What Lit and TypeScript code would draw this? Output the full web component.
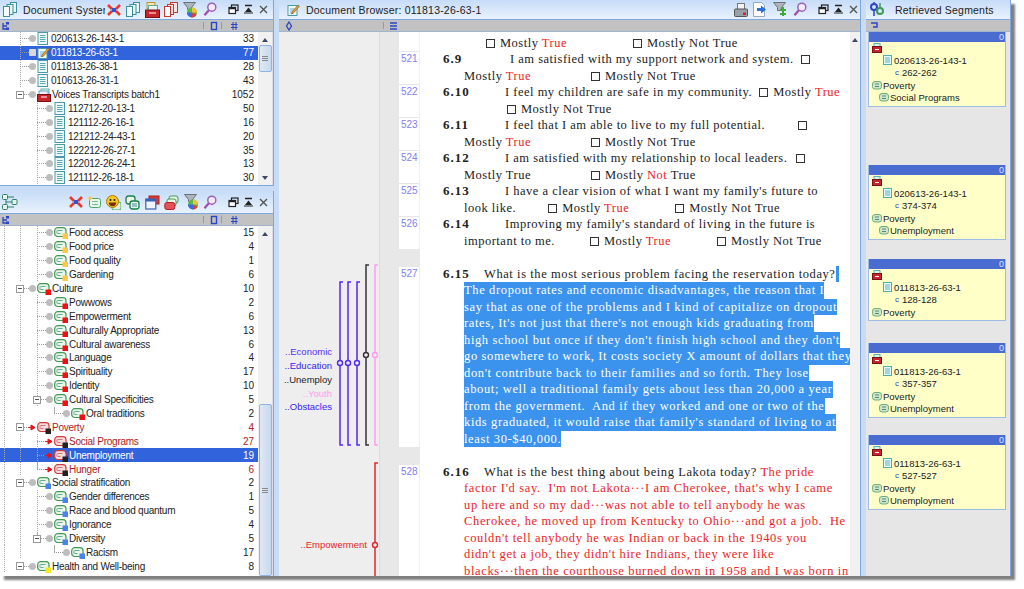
import { LitElement, html, css, svg } from "lit";
import { customElement } from "lit/decorators.js";

const S = (w: number, h: number, c: any) => html`<svg class="ic" width=${w} height=${h} viewBox="0 0 ${w} ${h}">${c}</svg>`;

const docI = () => S(13, 13, svg`<rect x="1" y=".5" width="9.500" height="12" fill="#eef8f8" stroke="#4a9aa8"/><path d="M3 3.500h5.500M3 5.500h5.500M3 7.500h5.500M3 9.500h5.500" stroke="#5aa9b5"/>`);
const memoI = () => S(13, 13, svg`<rect x="1" y="2.500" width="9" height="10" fill="#f4fafa" stroke="#4a9aa8"/><path d="M3 6h5M3 8h5M3 10h3" stroke="#7ab"/><path d="M5 9l6-7 1.500 1.200-6 7-2 .6z" fill="#e8a23a" stroke="#6b4a10" stroke-width=".5"/>`);
const setI = () => S(14, 14, svg`<rect x="4" y="1" width="8" height="6" fill="#dff" stroke="#6aa"/><rect x="2" y="3" width="9" height="5" fill="#eef" stroke="#6aa"/><rect x=".5" y="6.500" width="13" height="7" fill="#c8242c" stroke="#7a1015"/><path d="M4 9h6" stroke="#fff"/>`);
const codeI = (sq: string, red = false) => S(14, 13, svg`<rect x=".7" y="1.700" width="11.300" height="8.800" rx="3" fill=${red ? "#f6dcdc" : "#eaf6e8"} stroke=${red ? "#d23b3b" : "#3f9a56"} stroke-width="1.200"/><path d="M3.500 4.500h5M3.500 7.500h3M3 4.500v3" stroke=${red ? "#c77" : "#6a9"} fill="none"/><rect x="8.500" y="7.500" width="5.500" height="5.500" fill=${sq}/>`);
const smallCode = () => S(10, 10, svg`<rect x=".5" y="1.500" width="9" height="7.500" rx="2.500" fill="#cfe6c6" stroke="#6dae7c"/><path d="M3 4h4M3 6.500h4" stroke="#588"/>`);
const arrowI = () => S(8, 7, svg`<path d="M0 3.500h3M3 1l4 2.500-4 2.500z" fill="#e8101a" stroke="#e8101a"/>`);

const crossI = () => S(14, 14, svg`<path d="M1 2l4 4M13 2l-4 4M1 12l4-4M13 12l-4-4" stroke="#e8392c" stroke-width="2.600"/><rect x="5" y="5" width="4" height="4" fill="#2a55d8"/>`);
const docsI = () => S(14, 15, svg`<rect x="7.500" y=".5" width="6" height="10" fill="#e9f7f7" stroke="#3d8f9c"/><rect x="4" y="2.500" width="6" height="10" fill="#e9f7f7" stroke="#3d8f9c"/><rect x=".5" y="4.500" width="6" height="10" fill="#f4fbfb" stroke="#3d8f9c"/>`);
const redSetI = () => S(15, 16, svg`<rect x="2" y=".5" width="8" height="6" fill="#f5e6a8" stroke="#b9962e"/><rect x="3.500" y="3.500" width="9" height="5" fill="#eaf4f4" stroke="#6a9"/><rect x=".5" y="8" width="14" height="7.500" fill="#c8242c" stroke="#7a1015"/><path d="M4 11h7" stroke="#fff"/>`);
const copyI = () => S(14, 15, svg`<rect x="6.500" y=".5" width="7" height="10" fill="#fbe4e0" stroke="#c43a30"/><rect x="3.500" y="2.500" width="6" height="10" fill="#fbe4e0" stroke="#c43a30"/><rect x=".5" y="4.500" width="6" height="10" fill="#fff" stroke="#c43a30"/>`);
const filterI = () => S(15, 16, svg`<path d="M.5 .5h12l-4 5v2H4.500v-2z" fill="#aeb4bc" stroke="#6d727a"/><circle cx="9" cy="10.500" r="5" fill="#56b84a"/><path d="M9 10.500V5.500a5 5 0 0 1 5 5z" fill="#f2c230"/><path d="M9 10.500l4.500 2a5 5 0 0 1-4.500 3z" fill="#e23b3b"/><path d="M9 10.500v5a5 5 0 0 1-5-5z" fill="#3b6be2"/>`);
const magI = () => S(14, 15, svg`<circle cx="8.800" cy="5.200" r="4" fill="#f3eaf8" stroke="#9a62b5" stroke-width="1.500"/><path d="M5.800 8.300L1.500 13.300" stroke="#a04cb0" stroke-width="2.200"/>`);
const filtGreenI = () => S(15, 15, svg`<path d="M.5 .5h12l-4 5v3H4.500v-3z" fill="#aeb4bc" stroke="#6d727a"/><path d="M10 5v9M7 8h6M7 12h6" stroke="#43a83c" stroke-width="2"/>`);
const printI = () => S(14, 14, svg`<rect x="3.500" y=".5" width="7" height="6" fill="#f4f4f4" stroke="#777"/><rect x=".5" y="6" width="13" height="7.500" rx="1" fill="#9aa0a6" stroke="#555"/><rect x="9" y="9.500" width="3" height="2.500" fill="#d8232a"/>`);
const exportI = () => S(14, 15, svg`<path d="M.5 .5h8l3 3v11H.5z" fill="#fff" stroke="#9ab"/><path d="M4 6h4V3.500l5 4-5 4V9H4z" fill="#2a6fd8"/>`);
const winI = () => S(11, 11, svg`<rect x="3.500" y="1" width="6.500" height="5.500" fill="none" stroke="#222" stroke-width="1.200"/><rect x="1" y="3.500" width="6.500" height="6" fill="#fff" stroke="#222" stroke-width="1.200"/><path d="M1 4.500h6.500" stroke="#222" stroke-width="1.500"/>`);
const pinI = () => S(11, 11, svg`<path d="M2 1.500h7" stroke="#222" stroke-width="1.500"/><path d="M5.500 3.500L9 8H2z" fill="#222"/><path d="M1 9h9" stroke="#222"/>`);
const closeI = () => S(11, 11, svg`<path d="M2 2l7 7M9 2l-7 7" stroke="#555" stroke-width="1.400"/>`);
const netI = () => S(16, 16, svg`<path d="M4 3v10M4 3h8M4 13h8M4 8h8" stroke="#2f7f6a" fill="none"/><rect x=".5" y=".5" width="5" height="5" rx="1" fill="#e9f5e9" stroke="#2f7f6a"/><rect x=".5" y="10.500" width="5" height="5" rx="1" fill="#e9f5e9" stroke="#2f7f6a"/><rect x="10" y="5.500" width="5" height="5" rx="1" fill="#e9f5e9" stroke="#2f7f6a"/>`);
const codeYI = () => S(14, 15, svg`<rect x="2.500" y="3.500" width="11" height="9" rx="2" fill="#e9f7e6" stroke="#4aa66a"/><path d="M5 6.500h6M5 9.500h6" stroke="#7b9"/><path d="M3 .5l1 2 2 .5-2 1-1 2-1-2-2-1 2-.5z" fill="#f6c93c"/>`);
const smileI = () => S(15, 15, svg`<rect x="6" y="7" width="9" height="8" rx="2" fill="#dff0dc" stroke="#4aa66a"/><circle cx="6.500" cy="6.500" r="6" fill="#f8c820" stroke="#a87d10"/><circle cx="4.500" cy="5" r="1" fill="#222"/><circle cx="8.500" cy="5" r="1" fill="#222"/><path d="M2.800 7.500h7.400a3.700 3.700 0 0 1-7.400 0z" fill="#7a2a12"/>`);
const codesI = () => S(15, 15, svg`<rect x="1" y="1" width="9" height="8" rx="2.500" fill="#eaf6e8" stroke="#17804a" stroke-width="1.300"/><rect x="5" y="6" width="9" height="8" rx="2.500" fill="#eaf6e8" stroke="#17804a" stroke-width="1.300"/><path d="M7 9h5M7 11h5" stroke="#48a"/>`);
const frameI = () => S(15, 15, svg`<rect x="4" y="1" width="10" height="8" fill="#d8382e" stroke="#a22"/><rect x=".8" y="4" width="10" height="10" fill="#f1f5fb" stroke="#3a62b8" stroke-width="1.200"/><rect x=".8" y="4" width="10" height="2.500" fill="#3a62b8"/>`);
const stackI = () => S(15, 15, svg`<rect x="5" y="1" width="9" height="7" rx="2" fill="#eaf6e8" stroke="#3f9a56"/><rect x="3" y="4" width="9" height="7" rx="2" fill="#eaf6e8" stroke="#3f9a56"/><rect x=".8" y="7.500" width="10" height="7" rx="2" fill="#e6505a" stroke="#a22"/>`);
const linkI = () => S(16, 15, svg`<circle cx="5" cy="5" r="3" fill="none" stroke="#2b45c8" stroke-width="2"/><circle cx="11" cy="9" r="3" fill="none" stroke="#3f9a56" stroke-width="2"/><path d="M5 1v-1M5 8v6" stroke="#2b45c8" stroke-width="1.500"/><path d="M11 1v5" stroke="#3f9a56" stroke-width="1.500"/>`);
const tinyBlue = (c: any) => S(8, 10, c);
const treeTiny = () => tinyBlue(svg`<path d="M1 2v6h6M1 5h4" stroke="#2b45c8" fill="none" stroke-width="1.300"/><rect x="4" y="1" width="3" height="2.500" fill="#2b45c8"/><rect x="4" y="6.500" width="3" height="2.500" fill="#2b45c8"/>`);
const zeroTiny = () => tinyBlue(svg`<rect x="1.500" y="1.500" width="5" height="7" fill="none" stroke="#2b45c8" stroke-width="1.400"/>`);
const hashTiny = () => tinyBlue(svg`<path d="M3 1v8M6 1v8M1 3.500h6.500M1 6.500h6.500" stroke="#2b45c8"/>`);
const diaTiny = () => tinyBlue(svg`<path d="M4 1l2.500 4L4 9 1.500 5z" fill="none" stroke="#2b45c8" stroke-width="1.300"/>`);
const listTiny = () => tinyBlue(svg`<path d="M0 2h7M0 5h7M0 8h7" stroke="#2b45c8" stroke-width="1.300"/>`);
const segTiny = () => tinyBlue(svg`<path d="M1 2h6v4H3" fill="none" stroke="#2b45c8" stroke-width="1.500"/>`);

type Row = { l: number; t: string; n: string; c: number; sq?: string; exp?: boolean; g: number[]; h?: number; sel?: boolean; red?: boolean };

const topRows: Row[] = [
  ...[["020613-26-143-1", 33], ["011813-26-63-1", 77], ["011813-26-38-1", 28], ["010613-26-31-1", 43]].map(([n, c], i) => ({ l: 0, t: i === 1 ? "memo" : "doc", n, c, g: [20], sel: i === 1 } as Row)),
  { l: 0, t: "set", n: "Voices Transcripts batch1", c: 1052, exp: true, g: [] },
  ...[["112712-20-13-1", 50], ["121112-26-16-1", 16], ["121212-24-43-1", 20], ["122212-26-27-1", 35], ["122012-26-24-1", 13], ["121112-26-18-1", 30]].map(([n, c]) => ({ l: 1, t: "doc", n, c, g: [37] } as Row)),
];

const Y = "#ffc84a", R = "#ee1111", K = "#222", B = "#4a82f0";
const lowRows: Row[] = [
  ...([["Food access", 15], ["Food price", 4], ["Food quality", 1], ["Gardening", 6]] as [string, number][]).map(([n, c]) => ({ l: 1, t: "code", n, c, sq: Y, g: [4, 20, 37] })),
  { l: 0, t: "code", n: "Culture", c: 10, sq: R, exp: true, g: [4] },
  ...([["Powwows", 2], ["Empowerment", 6], ["Culturally Appropriate", 13], ["Cultural awareness", 6], ["Language", 4], ["Spirituality", 17], ["Identity", 10]] as [string, number][]).map(([n, c]) => ({ l: 1, t: "code", n, c, sq: R, g: [4, 20, 37] })),
  { l: 1, t: "code", n: "Cultural Specificities", c: 5, sq: R, exp: true, g: [4, 20, 37] },
  { l: 2, t: "code", n: "Oral traditions", c: 2, sq: R, g: [4, 20], h: 54 },
  { l: 0, t: "code", n: "Poverty", c: 4, sq: K, exp: true, red: true, g: [4] },
  { l: 1, t: "code", n: "Social Programs", c: 27, sq: K, red: true, g: [4, 20, 37] },
  { l: 1, t: "code", n: "Unemployment", c: 19, sq: K, red: true, sel: true, g: [4, 20, 37] },
  { l: 1, t: "code", n: "Hunger", c: 6, sq: K, red: true, g: [4, 20], h: 37 },
  { l: 0, t: "code", n: "Social stratification", c: 2, sq: B, exp: true, g: [4] },
  ...([["Gender differences", 1], ["Race and blood quantum", 5], ["Ignorance", 4]] as [string, number][]).map(([n, c]) => ({ l: 1, t: "code", n, c, sq: B, g: [4, 20, 37] })),
  { l: 1, t: "code", n: "Diversity", c: 5, sq: B, exp: true, g: [4, 20], h: 37 },
  { l: 2, t: "code", n: "Racism", c: 17, sq: B, g: [4, 20], h: 54 },
  { l: 0, t: "code", n: "Health and Well-being", c: 8, sq: "#f4e81e", exp: true, g: [4] },
];

const sp = (w: number) => html`<span class="sp" style="width:${w}px"></span>`;
const box = html`<span class="box"></span>`;
const r = (t: string) => html`<span class="r">${t}</span>`;

const paras = [
  { n: "", lines: [html`<div class="ln i2">${box}${sp(5)}Mostly ${r("True")}${sp(66)}${box}${sp(5)}Mostly Not True</div>`] },
  { n: "521", lines: [
    html`<div class="ln"><b class="q q9">6.9</b>I am satisfied with my support network and system.${sp(7)}${box}</div>`,
    html`<div class="ln i1">Mostly ${r("True")}${sp(60)}${box}${sp(5)}Mostly Not True</div>`] },
  { n: "522", lines: [
    html`<div class="ln"><b class="q">6.10</b>I feel my children are safe in my community.${sp(7)}${box}${sp(5)}Mostly ${r("True")}</div>`,
    html`<div class="ln i3">${box}${sp(5)}Mostly Not True</div>`] },
  { n: "523", lines: [
    html`<div class="ln"><b class="q">6.11</b>I feel that I am able to live to my full potential.${sp(33)}${box}</div>`,
    html`<div class="ln i1">Mostly ${r("True")}${sp(60)}${box}${sp(5)}Mostly Not True</div>`] },
  { n: "524", lines: [
    html`<div class="ln"><b class="q">6.12</b>I am satisfied with my relationship to local leaders.${sp(9)}${box}</div>`,
    html`<div class="ln i1">Mostly True${sp(60)}${box}${sp(5)}Mostly ${r("Not")} True</div>`] },
  { n: "525", lines: [
    html`<div class="ln"><b class="q">6.13</b>I have a clear vision of what I want my family's future to</div>`,
    html`<div class="ln i1">look like.${sp(32)}${box}${sp(5)}Mostly ${r("True")}${sp(46)}${box}${sp(5)}Mostly Not True</div>`] },
  { n: "526", lines: [
    html`<div class="ln"><b class="q">6.14</b>Improving my family's standard of living in the future is</div>`,
    html`<div class="ln i1">important to me.${sp(35)}${box}${sp(5)}Mostly ${r("True")}${sp(46)}${box}${sp(5)}Mostly Not True</div>`] },
];

const selLines = [
  "The dropout rates and economic disadvantages, the reason that I",
  "say that as one of the problems and I kind of capitalize on dropout",
  "rates, It's not just that there's not enough kids graduating from",
  "high school but once if they don't finish high school and they don't",
  "go somewhere to work, It costs society X amount of dollars that they",
  "don't contribute back to their families and so forth. They lose",
  "about; well a traditional family gets about less than 20,000 a year",
  "from the government.  And if they worked and one or two of the",
  "kids graduated, it would raise that family's standard of living to at",
  "least 30-$40,000.",
];
const redLines = [
  "factor I'd say.  I'm not Lakota···I am Cherokee, that's why I came",
  "up here and so my dad···was not able to tell anybody he was",
  "Cherokee, he moved up from Kentucky to Ohio···and got a job.  He",
  "couldn't tell anybody he was Indian or back in the 1940s you",
  "didn't get a job, they didn't hire Indians, they were like",
  "blacks···then the courthouse burned down in 1958 and I was born in",
];

const labels = [
  { t: "..Economic", y: 345, c: "#5a2cff" },
  { t: "..Education", y: 359, c: "#3a1cf0" },
  { t: "..Unemploy", y: 373, c: "#222" },
  { t: "..Youth", y: 387, c: "#ff9cf0" },
  { t: "..Obstacles", y: 400, c: "#3a1cf0" },
];

const cards = [
  { top: 0, doc: "020613-26-143-1", range: "262-262", code: "Social Programs" },
  { top: 58, doc: "020613-26-143-1", range: "374-374", code: "Unemployment" },
  { top: 19, doc: "011813-26-63-1", range: "128-128", code: "" },
  { top: 22, doc: "011813-26-63-1", range: "357-357", code: "Unemployment" },
  { top: 17, doc: "011813-26-63-1", range: "527-527", code: "Unemployment" },
];

@customElement("app-root")
export class AppRoot extends LitElement {
  static styles = css`
    :host { display: block; width: 1024px; height: 589px; overflow: hidden; background: #fff; font-family: "Liberation Sans", Arial, sans-serif; }
    .win { width: 1011px; height: 576px; display: flex; gap: 5px; background: #c9dcf5; box-shadow: 4px 4px 2px #808080; }
    .ic { display: block; flex: none; }
    .left { width: 274px; display: flex; flex-direction: column; gap: 5px; }
    .panel { display: flex; flex-direction: column; background: #fff; border-right: 1px solid #7ea7de; min-height: 0; overflow: hidden; }
    .p-top { height: 185px; border-bottom: 1px solid #7ea7de; }
    .p-low { flex: 1; }
    .head { height: 19px; flex: none; display: flex; align-items: center; background: linear-gradient(#c6dcf8, #e9f2fd); border-bottom: 1px solid #7ea7de; font-size: 10.500px; color: #222; letter-spacing: .2px; white-space: nowrap; overflow: hidden; }
    .p-low .head { height: 22px; }
    .title { margin-left: 6px; overflow: hidden; }
    .t-doc { width: 90px; }
    .t-doc2 { margin-left: 6px; }
    .t-seg { margin-left: 10px; }
    .tools { display: flex; align-items: center; gap: 4.800px; flex: none; }
    .tools-l { margin-left: 2px; }
    .tools-r { margin-left: auto; gap: 4.500px; }
    .tools-m { margin-left: auto; gap: 5.500px; }
    .wctl { display: flex; align-items: center; gap: 4px; margin-left: 11px; margin-right: 4px; flex: none; }
    .mid .wctl { margin-right: 1px; }
    .ml3 { margin-left: 3px; } .ml2 { margin-left: 2px; } .ml8 { margin-left: 8px; } .ml6 { margin-left: 6px; }
    .cols { height: 11px; flex: none; display: flex; align-items: center; background: #c2c2c2; border-bottom: 1px solid #9fb4cf; }
    .sep { width: 1px; height: 7px; background: #999; flex: none; }
    .sep1 { margin-left: 193px; } .sep2 { margin-left: 3px; } .sep3 { margin-left: 90px; }
    .body { flex: 1; display: flex; min-height: 0; overflow: hidden; }
    .tree { flex: 1; min-width: 0; overflow: hidden; }
    .row { height: 13.900px; display: flex; align-items: center; font-size: 10px; letter-spacing: -.25px; color: #222; background-repeat: no-repeat; white-space: nowrap; }
    .row.sel { background-color: #3163dc; color: #fff; }
    .row.red { color: #b01a20; }
    .row.red.sel { color: #fff; }
    .lead { flex: none; display: flex; align-items: center; height: 100%; box-sizing: border-box; }
    .hr { flex: 1; border-top: 1px dotted #999; }
    .exp { width: 8px; height: 8px; border: 1px solid #999; box-sizing: border-box; background: linear-gradient(#555,#555) center/4px 1px no-repeat #fff; flex: none; }
    .dot { width: 7px; height: 7px; border-radius: 50%; background: #bdbdbd; flex: none; margin-right: 1px; }
    .dot.sq { border-radius: 1px; background: #d8d8d8; }
    .slot { width: 7px; margin-right: 1px; display: flex; justify-content: flex-end; flex: none; }
    .label { margin-left: 1px; flex: 1; }
    .cnt { margin-right: 4px; text-align: right; letter-spacing: 0; }
    .sb { width: 14px; flex: none; background: #f1f1f1; display: flex; flex-direction: column; align-items: center; border-right: 1px solid #dde; position: relative; }
    .up, .down { width: 0; height: 0; border-left: 3.500px solid transparent; border-right: 3.500px solid transparent; flex: none; }
    .up { border-bottom: 4px solid #3a4a66; margin-top: 6px; }
    .down { border-top: 4px solid #3a4a66; margin-top: auto; margin-bottom: 5px; }
    .thumb { width: 13px; box-sizing: border-box; border: 1px solid #8fb2de; border-radius: 2px; background: linear-gradient(90deg,#dfe9f5,#c7d8ee); display: flex; flex-direction: column; justify-content: center; align-items: center; gap: 1px; flex: none; }
    .thumb i { display: block; width: 6px; height: 1px; background: #8a8a8a; }
    .t1 { height: 27px; margin-top: 3px; }
    .t2 { height: 172px; margin-top: 168px; }
    .mid { width: 581px; }
    .docbody { flex: 1; display: flex; background: #fff; min-height: 0; overflow: hidden; }
    .gut { width: 120px; flex: none; position: relative; background: linear-gradient(90deg, #eeeeee 100px, #dcdcdc 100px, #dcdcdc 101px, #e8e8e8 101px); overflow: hidden; }
    .gut svg { position: absolute; left: 0; top: 0; }
    .lab { position: absolute; right: 67px; font-size: 9.500px; line-height: 13px; white-space: nowrap; }
    .lab2 { right: 32px; color: #e8242c; top: 506px; }
    .doc { flex: 1; min-width: 0; overflow: hidden; background: #fff; font-family: "Liberation Serif", serif; font-size: 12.500px; letter-spacing: .5px; color: #222; }
    .para { display: flex; }
    .num { width: 21px; flex: none; background: #fff; font-family: "Liberation Sans", sans-serif; font-size: 10px; line-height: 11px; letter-spacing: 0; color: #7f7ff0; padding: 2px 0 0 2px; box-sizing: border-box; box-shadow: inset 0 1px 0 #e6e6e6; border-right: 1px solid #eee; }
    .first { padding-top: 2.750px; }
    .first .num { box-shadow: none; margin-top: -2.750px; }
    .txt { flex: 1; padding-left: 23px; min-width: 0; }
    .ln { height: 16.500px; line-height: 16.500px; white-space: pre; display: block; }
    .i1 { padding-left: 21px; }
    .i2 { padding-left: 43px; }
    .i3 { padding-left: 64px; }
    .q { display: inline-block; font-weight: 700; font-size: 13px; letter-spacing: 1px; width: 62px; }
    .q9 { width: 67px; }
    .q15 { width: 41px; }
    .sp { display: inline-block; height: 1px; }
    .box { display: inline-block; width: 9px; height: 9px; border: 1px solid #333; box-sizing: border-box; background: #fff; vertical-align: -1px; }
    .r { color: #ee1c25; }
    .gap { height: 16.500px; display: flex; }
    .gap i { width: 21px; background: #e8e8e8; display: block; }
    .sl { background: #3b93ee; color: #fff; display: inline-block; }
    .slend { width: 3px; }
    .wide { letter-spacing: .63px; }
    .mediumw { letter-spacing: .58px; }
    .redtxt { color: #ee1c25; letter-spacing: .65px; }
    .mid .sb { width: 10px; border-right: none; }
    .right { flex: 1; min-width: 0; }
    .segs { flex: 1; background: #e6e6e6; padding: 0 4px 0 2px; overflow: hidden; }
    .p-right .cols { padding-left: 4px; }
    .card { border: 1px solid #9dbce6; border-top: none; background: #ffffc8; height: 75px; box-sizing: border-box; font-size: 9.500px; color: #222; overflow: hidden; white-space: nowrap; }
    .card.short { height: 62px; }
    .bar { height: 10px; background: #4a6bd0; color: #dce6ff; font-size: 9px; line-height: 10px; text-align: right; padding-right: 2px; margin: 0 -1px; }
    .cr { height: 12.300px; display: flex; align-items: center; }
    .cr:first-of-type { margin-top: 3px; }
    .c0 { padding-left: 3px; }
    .c1 { padding-left: 14px; gap: 2px; }
    .c2 { padding-left: 26px; gap: 3px; }
    .c3 { padding-left: 3px; gap: 1px; }
    .c4 { padding-left: 10px; gap: 1px; }
    .mini { color: #2b45c8; font-size: 8px; }
  `;

  private row(r: Row) {
    const dx = r.l * 17;
    const grads = r.g.map(() => "linear-gradient(#aaa 50%, transparent 50%)");
    const pos = r.g.map((x) => `${x}px 0`);
    const size = r.g.map(() => "1px 2px");
    const rep = r.g.map(() => "repeat-y");
    if (r.h) { grads.push("linear-gradient(#aaa, #aaa)"); pos.push(`${r.h}px 0`); size.push("1px 7px"); rep.push("no-repeat"); }
    const bg = `background-image:${grads.join(",") || "none"};background-position:${pos.join(",") || "0 0"};background-size:${size.join(",") || "auto"};background-repeat:${rep.join(",") || "no-repeat"}`;
    const icon = r.t === "doc" ? docI() : r.t === "memo" ? memoI() : r.t === "set" ? setI() : codeI(r.sq!, r.red);
    return html`<div class="row ${r.sel ? "sel" : ""} ${r.red ? "red" : ""}" style=${bg}>
      <div class="lead" style="width:${29 + dx}px;padding-left:${r.exp ? 16 + dx : 20 + dx}px">
        ${r.exp ? html`<span class="exp"></span>` : ""}<span class="hr"></span>
      </div>
      ${r.red ? html`<span class="slot">${arrowI()}</span>` : html`<span class="dot ${r.sel ? "sq" : ""}"></span>`}
      ${icon}
      <span class="label">${r.n}</span><span class="cnt">${r.c}</span>
    </div>`;
  }

  private wctl() {
    return html`<div class="wctl">${winI()}${pinI()}${closeI()}</div>`;
  }

  private colsLeft() {
    return html`<div class="cols"><span class="ml2">${treeTiny()}</span><span class="sep sep1"></span><span class="ml6">${zeroTiny()}</span><span class="sep sep2"></span><span class="ml8">${hashTiny()}</span></div>`;
  }

  render() {
    return html`<div class="win">
      <div class="left">
        <section class="panel p-top">
          <div class="head"><span class="ml3">${docsI()}</span><span class="title t-doc">Document System</span>
            <div class="tools tools-l">${crossI()}${docsI()}${redSetI()}${copyI()}${filterI()}${magI()}</div>${this.wctl()}</div>
          ${this.colsLeft()}
          <div class="body"><div class="tree">${topRows.map((x) => this.row(x))}</div>
            <div class="sb"><span class="up"></span><div class="thumb t1"><i></i><i></i><i></i></div><span class="down"></span></div></div>
        </section>
        <section class="panel p-low">
          <div class="head"><span class="ml2">${netI()}</span>
            <div class="tools tools-r">${crossI()}${codeYI()}${smileI()}${codesI()}${frameI()}${stackI()}${filterI()}${magI()}</div>${this.wctl()}</div>
          ${this.colsLeft()}
          <div class="body"><div class="tree">${lowRows.map((x) => this.row(x))}</div>
            <div class="sb"><span class="up"></span><div class="thumb t2"><i></i><i></i><i></i></div></div></div>
        </section>
      </div>

      <section class="panel mid">
        <div class="head"><span class="ml8">${memoI()}</span><span class="title t-doc2">Document Browser: 011813-26-63-1</span>
          <div class="tools tools-m">${printI()}${exportI()}${filtGreenI()}${magI()}</div>${this.wctl()}</div>
        <div class="cols"><span class="ml6">${diaTiny()}</span><span class="sep sep3"></span><span class="ml6">${listTiny()}</span></div>
        <div class="docbody">
          <div class="gut">
            <svg width="120" height="545" viewBox="0 32 120 545">
              ${[[61, 282, "#5226f4"], [69, 282, "#5226f4"], [78, 282, "#5226f4"], [87, 265, "#333"], [96, 265, "#ff9cf0"]].map(([x, t, c]) => svg`
                <path d="M${Number(x) + 3} ${t}h-3V445h3" fill="none" stroke=${c} stroke-width="1.500"/>
                <circle cx=${x} cy=${t === 282 ? 363 : 355} r="2.500" fill="#eee" stroke=${c} stroke-width="1.400"/>`)}
              <path d="M99 463h-3V577" fill="none" stroke="#e8242c" stroke-width="1.500"/>
              <circle cx="96" cy="545" r="2.500" fill="#eee" stroke="#e8242c" stroke-width="1.400"/>
            </svg>
            ${labels.map((l) => html`<span class="lab" style="top:${l.y - 32}px;color:${l.c}">${l.t}</span>`)}
            <span class="lab lab2">..Empowerment</span>
          </div>
          <div class="doc">
            ${paras.map((p, i) => html`<div class="para ${i === 0 ? "first" : ""}"><div class="num">${p.n}</div><div class="txt">${p.lines}</div></div>`)}
            <div class="gap"><i></i></div>
            <div class="para"><div class="num">527</div><div class="txt">
              <div class="ln mediumw"><b class="q q15">6.15</b>What is the most serious problem facing the reservation today?<span class="sl slend">&nbsp;</span></div>
              ${selLines.map((t) => html`<div class="ln i1 wide"><span class="sl">${t}</span></div>`)}
            </div></div>
            <div class="gap"><i></i></div>
            <div class="para"><div class="num">528</div><div class="txt">
              <div class="ln mediumw"><b class="q q15">6.16</b>What is the best thing about being Lakota today? <span class="r">The pride</span></div>
              ${redLines.map((t) => html`<div class="ln i1 redtxt">${t}</div>`)}
            </div></div>
          </div>
          <div class="sb"><span class="up"></span></div>
        </div>
      </section>

      <section class="panel right p-right">
        <div class="head"><span class="ml3">${linkI()}</span><span class="title t-seg">Retrieved Segments</span></div>
        <div class="cols">${segTiny()}</div>
        <div class="segs">
          ${cards.map((c) => html`<div class="card ${c.code ? "" : "short"}" style="margin-top:${c.top}px">
            <div class="bar">0</div>
            <div class="cr c0">${S(10, 10, svg`<rect x="2" y=".5" width="6" height="4" fill="#cfe" stroke="#6aa"/><rect x=".5" y="3.500" width="9" height="6" fill="#c8242c" stroke="#7a1015"/><path d="M3 6.500h4" stroke="#fff"/>`)}</div>
            <div class="cr c1">${S(9, 10, svg`<rect x=".5" y=".5" width="8" height="9" fill="#dff" stroke="#5aa"/><path d="M2 3h5M2 5h5M2 7h5" stroke="#6ab"/>`)}${c.doc}</div>
            <div class="cr c2"><span class="mini">c</span>${c.range}</div>
            <div class="cr c3">${smallCode()}Poverty</div>
            ${c.code ? html`<div class="cr c4">${smallCode()}${c.code}</div>` : ""}
          </div>`)}
        </div>
      </section>
    </div>`;
  }
}
